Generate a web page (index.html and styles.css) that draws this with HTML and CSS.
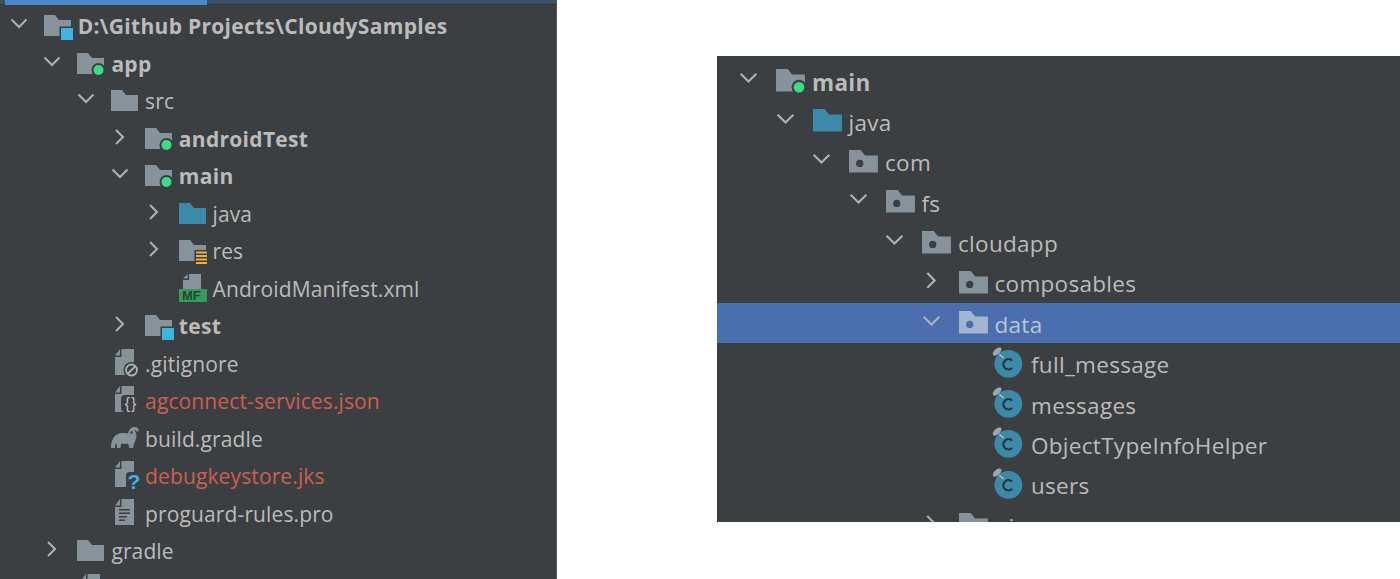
FILE: index.html
```html
<!DOCTYPE html>
<html lang="en">
<head>
    <meta charset="UTF-8">
    <meta name="viewport" content="width=device-width, initial-scale=1.0">
    <title>CloudySamples project tree</title>
    <link rel="stylesheet" href="styles.css">
</head>
<body>

<svg class="icon-defs" aria-hidden="true">
    <symbol id="arrow-down" viewBox="0 0 20 20"><path class="arrow-line" d="M2.5 3.5L10 11l7.5-7.5"/></symbol>
    <symbol id="arrow-right" viewBox="0 0 20 20"><path class="arrow-line" d="M6 1l7 7-7 7"/></symbol>

    <symbol id="folder" viewBox="0 0 28 24" overflow="visible"><path class="grey" d="M0 1h11l4 5h12v16H0z"/></symbol>
    <symbol id="folder-java" viewBox="0 0 28 24" overflow="visible"><path class="teal" d="M0 1h11l4 5h12v16H0z"/></symbol>
    <symbol id="folder-package" viewBox="0 0 28 24" overflow="visible">
        <path class="grey" d="M0 1h11l4 5h12v16H0z"/><circle class="dark" cx="10" cy="13.5" r="3.4"/>
    </symbol>
    <symbol id="folder-selected" viewBox="0 0 28 24" overflow="visible">
        <path class="pale" d="M0 1h11l4 5h12v16H0z"/><circle class="sel" cx="10" cy="13.5" r="3.4"/>
    </symbol>
    <symbol id="folder-source" viewBox="0 0 28 24" overflow="visible">
        <path class="grey" d="M0 1h11l4 5h12v16H0z"/><circle class="dark" cx="21.5" cy="18" r="7"/><circle class="green" cx="21.5" cy="18" r="5"/>
    </symbol>
    <symbol id="folder-module" viewBox="0 0 28 24" overflow="visible">
        <path class="grey" d="M0 1h11l4 5h12v16H0z"/><rect class="dark" x="15.5" y="12.5" width="15" height="15"/><rect class="blue" x="17" y="14" width="12" height="12"/>
    </symbol>
    <symbol id="folder-res" viewBox="0 0 28 24" overflow="visible">
        <path class="grey" d="M0 1h11l4 5h12v16H0z"/><rect class="dark" x="15.5" y="11" width="14" height="16"/>
        <path class="amber" d="M17 12.5h11v2H17zM17 16h11v2H17zM17 19.5h11v2H17zM17 23h11v2H17z"/>
    </symbol>

    <symbol id="file-manifest" viewBox="0 0 28 24" overflow="visible">
        <path class="grey" d="M4 3h6V-3h12v15H4zM4 1.5L8.5-3v4.500z"/>
        <rect class="badge" x="0" y="12" width="28" height="13"/>
        <text class="badge-text" x="3" y="23">MF</text>
    </symbol>
    <symbol id="file-ignored" viewBox="0 0 28 24" overflow="visible">
        <path class="grey" d="M4 5h6.500V-3H23v26H4zM4 3.500L9-3v6.500z"/>
        <circle class="dark" cx="20.500" cy="18" r="8"/>
        <circle class="ring" cx="20.500" cy="18" r="5.500"/><path class="ring" d="M16.500 22l8-8"/>
    </symbol>
    <symbol id="file-json" viewBox="0 0 28 24" overflow="visible">
        <path class="grey" d="M4 5h6.500V-3H23v26H4zM4 3.500L9-3v6.500z"/>
        <rect class="dark" x="10" y="6" width="20" height="17" rx="4"/>
        <text class="json-text" x="20" y="20">{}</text>
    </symbol>
    <symbol id="file-unknown" viewBox="0 0 28 24" overflow="visible">
        <path class="grey" d="M4 5h6.500V-3H23v26H4zM4 3.500L9-3v6.500z"/>
        <rect class="dark" x="15" y="8" width="15" height="18" rx="4"/>
        <text class="unknown-text" x="23" y="25">?</text>
    </symbol>
    <symbol id="file-text" viewBox="0 0 28 24" overflow="visible">
        <path class="grey" d="M4 5h6.500V-3H23v26H4zM4 3.500L9-3v6.500z"/>
        <path class="dark" d="M8 7h11v1.600H8zM8 10.500h11v1.600H8zM8 14h8v1.600H8zM8 17.500h6v1.600H8z"/>
    </symbol>
    <symbol id="gradle" viewBox="0 0 28 24" overflow="visible">
        <path class="grey" d="M0 21C0 12 4 6.500 11 6c3-.2 4.500.5 6 .5C18 2.500 20 0 23.500 0 26 0 27.500 1.500 28 3.500l-2.500 1.200C25 3.200 24 3 23.500 3.500 25.500 6 25.800 8.500 25.200 11c-.8 4-2.700 5-3 10h-4c0-2-.5-4-2-4.500-1.500.5-4 .5-5.500 0-1 .5-1.200 3-1.200 4.500H6c0-2 0-3.500-.8-4.500C4 17.500 4 19 4 21z"/>
        <circle class="dark" cx="20.500" cy="5.500" r="1.200"/>
    </symbol>
    <symbol id="class" viewBox="0 0 28 24" overflow="visible">
        <circle class="teal" cx="12.500" cy="12" r="13"/>
        <ellipse class="pin" cx="2" cy="0.500" rx="5" ry="2.600" transform="rotate(-42 2 0.500)"/>
        <path class="pin-line" d="M4 3l4 3.500"/>
        <path class="class-c" d="M16 9a4.800 4.800 0 1 0 0 6.800"/>
    </symbol>
</svg>

<div class="top-strip"><div class="top-tab"></div></div>

<div class="tree tree-left">
    <div class="row depth-0"><svg class="arrow"><use href="#arrow-down"/></svg><svg class="icon"><use href="#folder-module"/></svg><span class="label bold">D:\Github Projects\CloudySamples</span></div>
    <div class="row depth-1"><svg class="arrow"><use href="#arrow-down"/></svg><svg class="icon"><use href="#folder-source"/></svg><span class="label bold">app</span></div>
    <div class="row depth-2"><svg class="arrow"><use href="#arrow-down"/></svg><svg class="icon"><use href="#folder"/></svg><span class="label">src</span></div>
    <div class="row depth-3"><svg class="arrow"><use href="#arrow-right"/></svg><svg class="icon"><use href="#folder-source"/></svg><span class="label bold">androidTest</span></div>
    <div class="row depth-3"><svg class="arrow"><use href="#arrow-down"/></svg><svg class="icon"><use href="#folder-source"/></svg><span class="label bold">main</span></div>
    <div class="row depth-4"><svg class="arrow"><use href="#arrow-right"/></svg><svg class="icon"><use href="#folder-java"/></svg><span class="label">java</span></div>
    <div class="row depth-4"><svg class="arrow"><use href="#arrow-right"/></svg><svg class="icon"><use href="#folder-res"/></svg><span class="label">res</span></div>
    <div class="row depth-4"><span class="arrow"></span><svg class="icon"><use href="#file-manifest"/></svg><span class="label">AndroidManifest.xml</span></div>
    <div class="row depth-3"><svg class="arrow"><use href="#arrow-right"/></svg><svg class="icon"><use href="#folder-module"/></svg><span class="label bold">test</span></div>
    <div class="row depth-2"><span class="arrow"></span><svg class="icon"><use href="#file-ignored"/></svg><span class="label">.gitignore</span></div>
    <div class="row depth-2"><span class="arrow"></span><svg class="icon"><use href="#file-json"/></svg><span class="label untracked">agconnect-services.json</span></div>
    <div class="row depth-2"><span class="arrow"></span><svg class="icon"><use href="#gradle"/></svg><span class="label">build.gradle</span></div>
    <div class="row depth-2"><span class="arrow"></span><svg class="icon"><use href="#file-unknown"/></svg><span class="label untracked">debugkeystore.jks</span></div>
    <div class="row depth-2"><span class="arrow"></span><svg class="icon"><use href="#file-text"/></svg><span class="label">proguard-rules.pro</span></div>
    <div class="row depth-1"><svg class="arrow"><use href="#arrow-right"/></svg><svg class="icon"><use href="#folder"/></svg><span class="label">gradle</span></div>
    <div class="row depth-1"><span class="arrow"></span><svg class="icon"><use href="#file-text"/></svg></div>
</div>

<div class="tree tree-right">
    <div class="row depth-0"><svg class="arrow"><use href="#arrow-down"/></svg><svg class="icon"><use href="#folder-source"/></svg><span class="label bold">main</span></div>
    <div class="row depth-1"><svg class="arrow"><use href="#arrow-down"/></svg><svg class="icon"><use href="#folder-java"/></svg><span class="label">java</span></div>
    <div class="row depth-2"><svg class="arrow"><use href="#arrow-down"/></svg><svg class="icon"><use href="#folder-package"/></svg><span class="label">com</span></div>
    <div class="row depth-3"><svg class="arrow"><use href="#arrow-down"/></svg><svg class="icon"><use href="#folder-package"/></svg><span class="label">fs</span></div>
    <div class="row depth-4"><svg class="arrow"><use href="#arrow-down"/></svg><svg class="icon"><use href="#folder-package"/></svg><span class="label">cloudapp</span></div>
    <div class="row depth-5"><svg class="arrow"><use href="#arrow-right"/></svg><svg class="icon"><use href="#folder-package"/></svg><span class="label">composables</span></div>
    <div class="row depth-5 selected"><svg class="arrow"><use href="#arrow-down"/></svg><svg class="icon"><use href="#folder-selected"/></svg><span class="label">data</span></div>
    <div class="row depth-6"><span class="arrow"></span><svg class="icon"><use href="#class"/></svg><span class="label">full_message</span></div>
    <div class="row depth-6"><span class="arrow"></span><svg class="icon"><use href="#class"/></svg><span class="label">messages</span></div>
    <div class="row depth-6"><span class="arrow"></span><svg class="icon"><use href="#class"/></svg><span class="label">ObjectTypeInfoHelper</span></div>
    <div class="row depth-6"><span class="arrow"></span><svg class="icon"><use href="#class"/></svg><span class="label">users</span></div>
    <div class="row depth-5"><svg class="arrow"><use href="#arrow-right"/></svg><svg class="icon"><use href="#folder-package"/></svg><span class="label">ui</span></div>
</div>

</body>
</html>
```

FILE: styles.css
```css
body {
    margin: 0;
    height: 579px;
    overflow: hidden;
    background-color: #fff;
    font-family: "Open Sans", "Noto Sans", sans-serif;
    display: grid;
    grid-template-columns: 557px 1fr;
    grid-template-rows: 5px 1fr;
}

.icon-defs {
    display: none;
}

.top-strip {
    grid-column: 1;
    grid-row: 1;
    background-color: #3d5166;
    border-bottom: 1px solid #2f3234;
    border-right: 1px solid #5a5d5f;
    padding-left: 5px;
}

.top-tab {
    width: 202px;
    height: 5px;
    background-color: #4a88c7;
}

.tree {
    background-color: #3c3f41;
    color: #bbb;
    overflow: hidden;
}

.tree-left {
    --row: 37.5px;
    --indent: 33.7px;
    --start: 8.7px;
    --arrow: 20px;
    --arrow-gap: 15px;
    --icon-w: 28px;
    --icon-h: 24px;
    --icon-gap: 6px;
    --text: 21px;
    --text-drop: 1px;
    --spacing: 0.12px;
    --spacing-bold: 0.3px;
    grid-column: 1;
    grid-row: 2;
    padding-top: 2.5px;
    border-right: 1px solid #5a5d5f;
}

.tree-right {
    --row: 40.4px;
    --indent: 36.5px;
    --start: 21px;
    --arrow: 21px;
    --arrow-gap: 17px;
    --icon-w: 30px;
    --icon-h: 25.7px;
    --icon-gap: 6px;
    --text: 22.5px;
    --text-drop: 4px;
    --spacing: 0.3px;
    --spacing-bold: 0.3px;
    grid-column: 2;
    grid-row: 2;
    margin: 51px 0 57px 160px;
    padding-top: 4.6px;
}

.row {
    height: var(--row);
    display: flex;
    align-items: center;
    padding-left: calc(var(--start) + var(--indent) * var(--depth));
    white-space: nowrap;
}

.depth-0 { --depth: 0; }
.depth-1 { --depth: 1; }
.depth-2 { --depth: 2; }
.depth-3 { --depth: 3; }
.depth-4 { --depth: 4; }
.depth-5 { --depth: 5; }
.depth-6 { --depth: 6; }

.selected {
    background-color: #4b6eaf;
}

.arrow {
    flex: none;
    width: var(--arrow);
    height: var(--arrow);
    margin-right: var(--arrow-gap);
}

.icon {
    flex: none;
    width: var(--icon-w);
    height: var(--icon-h);
    margin-right: var(--icon-gap);
    overflow: visible;
}

.label {
    font-size: var(--text);
    line-height: 1;
    padding-top: var(--text-drop);
    letter-spacing: var(--spacing);
}

.bold {
    font-weight: 700;
    letter-spacing: var(--spacing-bold);
}

.untracked {
    color: #cc5f50;
}

.selected .label {
    color: #bcc4d2;
}

/* icon parts */
.arrow-line {
    fill: none;
    stroke: #afb1b3;
    stroke-width: 2;
}

.grey { fill: #87939a; }
.teal { fill: #3d8aa8; }
.pale { fill: #a3b5d0; }
.sel { fill: #4b6eaf; }
.dark { fill: #3c3f41; }
.green { fill: #3ddc84; }
.blue { fill: #3eb4e0; }
.amber { fill: #f4af3d; }
.badge { fill: #389a5a; }

.badge-text {
    fill: #1e4a2e;
    font: 700 13px "Liberation Sans", sans-serif;
}

.ring {
    fill: none;
    stroke: #afb1b3;
    stroke-width: 1.8;
}

.json-text {
    fill: #bbb;
    text-anchor: middle;
    font: 400 16px "Liberation Sans", sans-serif;
    letter-spacing: 1px;
}

.unknown-text {
    fill: #3eb4e0;
    text-anchor: middle;
    font: 700 21px "Liberation Sans", sans-serif;
}

.pin {
    fill: #9aa7b0;
}

.pin-line {
    fill: none;
    stroke: #a9c7d3;
    stroke-width: 1.4;
}

.class-c {
    fill: none;
    stroke: #20343f;
    stroke-width: 2;
}
```
